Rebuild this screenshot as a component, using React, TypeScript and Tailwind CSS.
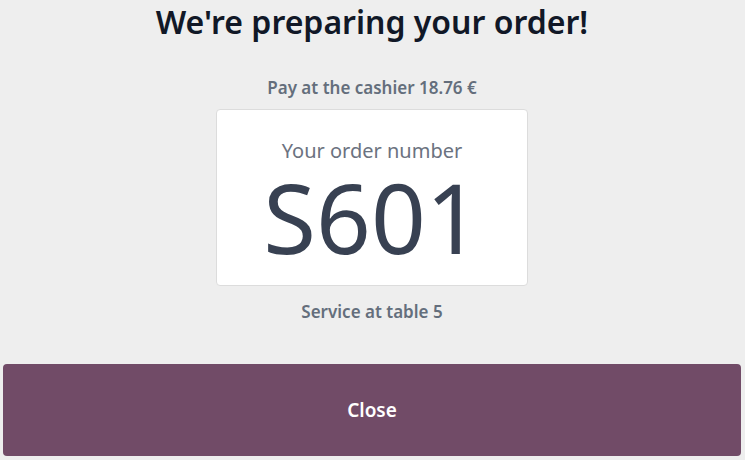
export default function App() {
  return (
    <div
      className="flex h-[460px] w-[745px] flex-col items-center bg-[#eeeeee] pr-[4px] pb-[4px] pl-[3px]"
      style={{ fontFamily: '"Noto Sans", "Open Sans", sans-serif' }}
    >
      <h1 className="text-[32px] leading-[44px] font-semibold text-[#111827]">We're preparing your order!</h1>
      <p className="mt-[32px] text-[17px] leading-[24px] font-semibold text-[#646e7c]">Pay at the cashier 18.76 €</p>
      <div className="mt-[9px] flex h-[177px] w-[312px] flex-col items-center rounded-[4px] border border-[#dcdcdc] bg-white">
        <p className="mt-[27px] text-[20px] leading-[28px] text-[#6b7280]">Your order number</p>
        <p className="mt-[4px] text-[96px] leading-[96px] text-[#384152]">S601</p>
      </div>
      <p className="mt-[14px] text-[17px] leading-[24px] font-semibold text-[#646e7c]">Service at table 5</p>
      <button className="mt-auto flex h-[92px] w-full items-center justify-center rounded-[4px] bg-[#714b67] text-[19px] font-semibold text-white">
        Close
      </button>
    </div>
  )
}
